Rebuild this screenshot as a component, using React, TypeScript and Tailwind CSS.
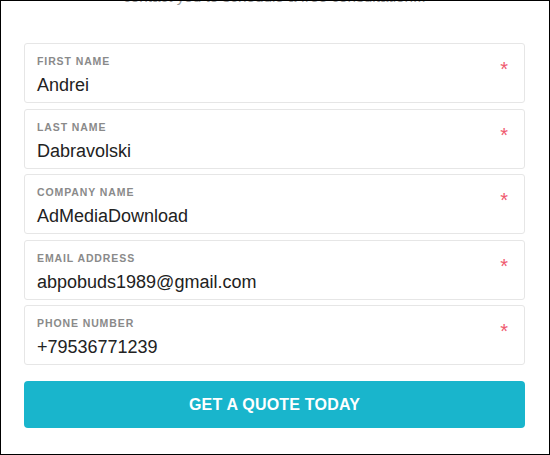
import React from "react";

const fields = [
  { label: "FIRST NAME", value: "Andrei" },
  { label: "LAST NAME", value: "Dabravolski" },
  { label: "COMPANY NAME", value: "AdMediaDownload" },
  { label: "EMAIL ADDRESS", value: "abpobuds1989@gmail.com" },
  { label: "PHONE NUMBER", value: "+79536771239" },
];

export default function App() {
  return (
    <div
      className="w-[550px] h-[455px] border border-black bg-white overflow-hidden pl-[23px] pr-[24px]"
      style={{ fontFamily: '"Liberation Sans", Arial, sans-serif' }}
    >
      <div className="mt-[-14px] text-center text-[15.3px] leading-[20px] text-[#9a9a9a]">
        contact you to schedule a free consultation...
      </div>
      <div className="mt-[36px] flex flex-col gap-[5.5px]">
        {fields.map((f) => (
          <div
            key={f.label}
            className="relative h-[60px] border border-[#e6e6e6] rounded-[3px] pl-[12px] pt-[11px]"
          >
            <div className="text-[10.5px] leading-[12px] font-bold tracking-[0.9px] text-[#8a8a8a]">
              {f.label}
            </div>
            <div className="mt-[6px] text-[18px] leading-[24px] text-[#222222]">
              {f.value}
            </div>
            <span className="absolute top-[15px] right-[16px] text-[20px] leading-none text-[#ef5a6f]">
              *
            </span>
          </div>
        ))}
      </div>
      <button className="mt-[16px] w-full h-[47px] rounded-[4px] bg-[#19b5cc] text-white font-bold text-[16px] tracking-[0.2px] flex items-center justify-center">
        GET A QUOTE TODAY
      </button>
    </div>
  );
}
